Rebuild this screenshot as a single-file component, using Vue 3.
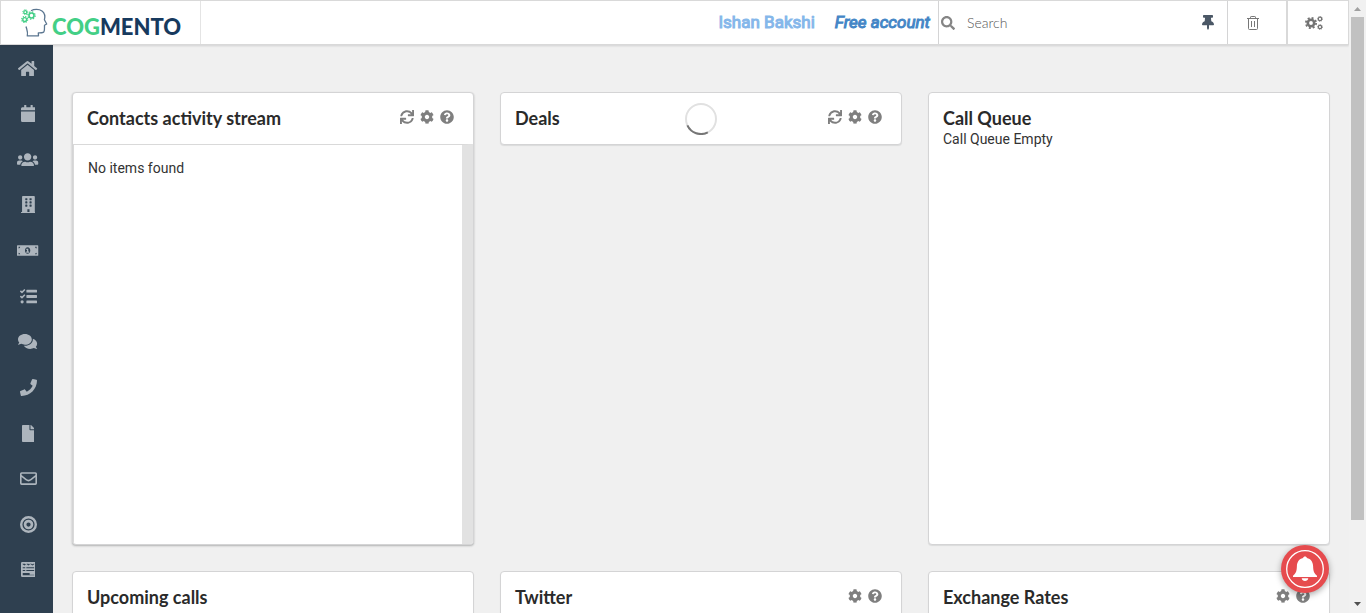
<script setup>
const icons = {
  home: {
    w: 576,
    d: 'M280.37 148.26L96 300.11V464a16 16 0 0 0 16 16l112.06-.29a16 16 0 0 0 15.92-16V368a16 16 0 0 1 16-16h64a16 16 0 0 1 16 16v95.64a16 16 0 0 0 16 16.05L464 480a16 16 0 0 0 16-16V300L295.67 148.26a12.19 12.19 0 0 0-15.3 0zM571.6 251.47L488 182.56V44.05a12 12 0 0 0-12-12h-56a12 12 0 0 0-12 12v72.61L318.47 43a48 48 0 0 0-61 0L4.34 251.47a12 12 0 0 0-1.6 16.9l25.5 31A12 12 0 0 0 45.15 301l235.22-193.74a12.19 12.19 0 0 1 15.3 0L530.9 301a12 12 0 0 0 16.9-1.6l25.5-31a12 12 0 0 0-1.7-16.93z',
  },
  calendar: {
    w: 448,
    d: 'M12 192h424c6.6 0 12 5.4 12 12v260c0 26.5-21.5 48-48 48H48c-26.5 0-48-21.5-48-48V204c0-6.6 5.4-12 12-12zm436-44v-36c0-26.5-21.5-48-48-48h-48V12c0-6.6-5.4-12-12-12h-40c-6.6 0-12 5.4-12 12v52H160V12c0-6.6-5.4-12-12-12h-40c-6.6 0-12 5.4-12 12v52H48C21.5 64 0 85.5 0 112v36c0 6.6 5.4 12 12 12h424c6.6 0 12-5.4 12-12z',
  },
  users: {
    w: 640,
    d: 'M96 256c35.3 0 64-28.7 64-64s-28.7-64-64-64-64 28.7-64 64 28.7 64 64 64zm448 0c35.3 0 64-28.7 64-64s-28.7-64-64-64-64 28.7-64 64 28.7 64 64 64zm32 32h-64c-17.6 0-33.5 7.1-45.1 18.6 40.3 22.1 68.9 62 75.1 109.4h66c17.7 0 32-14.3 32-32v-32c0-35.3-28.7-64-64-64zm-256 0c61.9 0 112-50.1 112-112S381.9 64 320 64 208 114.1 208 176s50.1 112 112 112zm76.8 32h-8.3c-20.8 10-43.9 16-68.5 16s-47.6-6-68.5-16h-8.3C179.6 320 128 371.600 128 432q0 16 16 16h352q16 0 16-16c0-60.400-51.600-112-115.200-112zm-223.700-13.400C161.500 295.100 145.600 288 128 288H64c-35.300 0-64 28.700-64 64v32c0 17.700 14.300 32 32 32h65.900c6.300-47.400 34.900-87.300 75.200-109.400z',
  },
  building: {
    w: 448,
    d: 'M12 480h20V24C32 11 43 0 56 0h336c13 0 24 11 24 24v456h20q12 0 12 12v20H0v-20q0-12 12-12zM128 76v40q0 12 12 12h40q12 0 12-12V76q0-12-12-12h-40q-12 0-12 12zM256 76v40q0 12 12 12h40q12 0 12-12V76q0-12-12-12h-40q-12 0-12 12zM128 172v40q0 12 12 12h40q12 0 12-12v-40q0-12-12-12h-40q-12 0-12 12zM256 172v40q0 12 12 12h40q12 0 12-12v-40q0-12-12-12h-40q-12 0-12 12zM128 268v40q0 12 12 12h40q12 0 12-12v-40q0-12-12-12h-40q-12 0-12 12zM256 268v40q0 12 12 12h40q12 0 12-12v-40q0-12-12-12h-40q-12 0-12 12zM192 396v84h64v-84z',
  },
  money: {
    w: 640,
    d: 'M20 96h600q20 0 20 20v280q0 20-20 20H20q-20 0-20-20V116q0-20 20-20zM48 144v48q48 0 48-48zM544 144q0 48 48 48v-48zM48 320v48h48q0-48-48-48zM592 320q-48 0-48 48h48zM320 160c-48 0-80 44-80 96s32 96 80 96 80-44 80-96-32-96-80-96zM280 200h60v88h24v32h-88v-32h26v-50h-22z',
  },
  tasks: {
    w: 512,
    d: 'M139.600 35.500a12 12 0 0 0-17 0L58.900 98.800l-22.700-22.100a12 12 0 0 0-17 0L3.500 92.400a12 12 0 0 0 0 17l47.600 47.400a12.800 12.800 0 0 0 17.600 0L156 69.500a12 12 0 0 0 0-17zM139.600 194.200a12 12 0 0 0-17 0L58.900 257.900l-22.700-22.500a12 12 0 0 0-17 0L3.500 251a12 12 0 0 0 0 17l47.600 47.500a12.800 12.800 0 0 0 17.600 0L156 228a12 12 0 0 0 0-17zM64 368a48 48 0 1 0 0 96a48 48 0 1 0 0-96zM208 54h288q16 0 16 16v52q0 16-16 16H208q-16 0-16-16V70q0-16 16-16zM208 214h288q16 0 16 16v52q0 16-16 16H208q-16 0-16-16v-52q0-16 16-16zM208 374h288q16 0 16 16v52q0 16-16 16H208q-16 0-16-16v-52q0-16 16-16z',
  },
  comments: {
    w: 576,
    d: 'M416 192c0-88.4-93.1-160-208-160S0 103.6 0 192c0 34.3 14.1 65.9 38 92-13.4 30.2-35.5 54.2-35.8 54.5-2.2 2.3-2.8 5.7-1.5 8.7S4.800 352 8 352c36.600 0 66.900-12.300 88.700-25 32.200 15.700 70.300 25 111.300 25 114.900 0 208-71.600 208-160zm122 220c23.900-26 38-57.700 38-92 0-66.900-53.500-124.200-129.300-148.100.9 6.600 1.300 13.300 1.300 20.100 0 105.900-107.700 192-240 192-10.800 0-21.300-.8-31.700-1.900C207.800 439.600 281.800 480 368 480c41 0 79.100-9.200 111.300-25 21.800 12.700 52.100 25 88.700 25 3.200 0 6.100-1.900 7.300-4.800 1.300-2.900.7-6.300-1.500-8.700-.3-.3-22.400-24.200-35.800-54.500z',
  },
  phone: {
    w: 512,
    d: 'M493.4 24.6l-104-24c-11.3-2.6-22.9 3.3-27.5 13.900l-48 112c-4.200 9.800-1.400 21.300 6.900 28l60.600 49.600c-36 76.700-98.900 140.500-177.200 177.200l-49.600-60.600c-6.800-8.300-18.200-11.100-28-6.900l-112 48C3.900 366.500-2 378.100.6 389.400l24 104C27.100 504.200 36.700 512 48 512c256.100 0 464-207.500 464-464 0-11.200-7.700-20.900-18.600-23.400z',
  },
  file: {
    w: 384,
    d: 'M224 136V0H24C10.700 0 0 10.700 0 24v464c0 13.300 10.700 24 24 24h336c13.300 0 24-10.700 24-24V160H248c-13.200 0-24-10.800-24-24zm160-14.100v6.100H256V0h6.100c6.400 0 12.500 2.500 17 7l97.900 98c4.500 4.500 7 10.600 7 16.900z',
  },
  mail: {
    w: 512,
    d: 'M48 64h416q48 0 48 48v288q0 48-48 48H48q-48 0-48-48V112q0-48 48-48zM56 112q-8 0-8 8v34l150 118q58 46 116 0l150-118v-34q0-8-8-8zM48 214v178q0 8 8 8h400q8 0 8-8V214L342 310q-86 66-172 0z',
  },
  target: {
    w: 512,
    d: 'M256 0a256 256 0 1 0 0 512a256 256 0 1 0 0-512zM256 72a184 184 0 1 1 0 368a184 184 0 1 1 0-368zM256 112a144 144 0 1 0 0 288a144 144 0 1 0 0-288zM256 192a64 64 0 1 1 0 128a64 64 0 1 1 0-128z',
  },
  form: {
    w: 448,
    d: 'M36 32h376q36 0 36 36v376q0 36-36 36H36q-36 0-36-36V68q0-36 36-36zM48 80v16l56 40 60-44 60 44 60-44 60 44 56-40V80h-24l-32 20-36-20h-40l-24 16-24-16h-40l-36 20-28-20zM52 190v28h76v-28zM160 190v28h236v-28zM52 274v28h76v-28zM160 274v28h236v-28zM52 358v72h344v-16H260v-56z',
  },
  refresh: {
    w: 512,
    d: 'M440.650 12.570l4 82.770A247.160 247.160 0 0 0 255.830 8C134.730 8 33.910 94.920 12.290 209.820A12 12 0 0 0 24.090 224h49.050a12 12 0 0 0 11.670-9.260 175.910 175.910 0 0 1 317-56.940l-101.460-4.860a12 12 0 0 0-12.570 12v47.410a12 12 0 0 0 12 12H500a12 12 0 0 0 12-12V12a12 12 0 0 0-12-12h-47.370a12 12 0 0 0-11.980 12.570zM255.830 432a175.610 175.610 0 0 1-146-77.800l101.800 4.870a12 12 0 0 0 12.570-12v-47.400a12 12 0 0 0-12-12H12a12 12 0 0 0-12 12V500a12 12 0 0 0 12 12h47.350a12 12 0 0 0 12-12.600l-4.150-82.570A247.170 247.170 0 0 0 255.830 504c121.110 0 221.930-86.920 243.550-201.820a12 12 0 0 0-11.800-14.180h-49.050a12 12 0 0 0-11.670 9.260A175.860 175.860 0 0 1 255.830 432z',
  },
  cog: {
    w: 512,
    d: 'M487.4 315.7l-42.6-24.6c4.3-23.2 4.3-47 0-70.2l42.6-24.6c4.9-2.8 7.1-8.6 5.5-14-11.1-35.6-30-67.8-54.7-94.6-3.8-4.1-10-5.1-14.8-2.3L380.8 110c-17.9-15.4-38.5-27.3-60.8-35.1V25.8c0-5.6-3.9-10.5-9.4-11.7-36.7-8.2-74.3-7.8-109.2 0-5.5 1.2-9.4 6.1-9.4 11.7V75c-22.2 7.9-42.8 19.8-60.8 35.1L88.7 85.5c-4.9-2.8-11-1.9-14.8 2.3-24.7 26.7-43.6 58.9-54.7 94.6-1.700 5.400.6 11.200 5.500 14L67.300 221c-4.300 23.200-4.300 47 0 70.200l-42.600 24.600c-4.900 2.800-7.100 8.600-5.500 14 11.100 35.600 30 67.800 54.700 94.600 3.800 4.100 10 5.100 14.800 2.300l42.600-24.600c17.900 15.400 38.500 27.300 60.800 35.100v49.200c0 5.600 3.900 10.500 9.400 11.700 36.700 8.200 74.300 7.800 109.200 0 5.500-1.200 9.400-6.100 9.400-11.700v-49.200c22.200-7.900 42.800-19.800 60.800-35.100l42.600 24.600c4.900 2.800 11 1.900 14.800-2.300 24.700-26.700 43.600-58.900 54.700-94.600 1.500-5.500-.7-11.300-5.600-14.100zM256 336c-44.100 0-80-35.900-80-80s35.900-80 80-80 80 35.900 80 80-35.900 80-80 80z',
  },
  help: {
    w: 512,
    d: 'M504 256c0 136.997-111.043 248-248 248S8 392.997 8 256C8 119.083 119.043 8 256 8s248 111.083 248 248zM262.655 90c-54.497 0-89.255 22.957-116.549 63.758-3.536 5.286-2.353 12.415 2.715 16.258l34.699 26.310c5.205 3.947 12.621 3.008 16.665-2.122 17.864-22.658 30.113-35.797 57.303-35.797 20.429 0 45.698 13.148 45.698 32.958 0 14.976-12.363 22.667-32.534 33.976C247.128 238.528 216 254.941 216 296v4c0 6.627 5.373 12 12 12h56c6.627 0 12-5.373 12-12v-1.333c0-28.462 83.186-29.647 83.186-106.667 0-58.002-60.165-102-116.531-102zM256 338c-25.365 0-46 20.635-46 46 0 25.364 20.635 46 46 46s46-20.636 46-46c0-25.365-20.635-46-46-46z',
  },
}

const nav = [
  ['home', 'Home'],
  ['calendar', 'Calendar'],
  ['users', 'Contacts'],
  ['building', 'Companies'],
  ['money', 'Deals'],
  ['tasks', 'Tasks'],
  ['comments', 'Cases'],
  ['phone', 'Calls'],
  ['file', 'Documents'],
  ['mail', 'Email'],
  ['target', 'Campaigns'],
  ['form', 'Forms'],
]

const cards = [
  { title: 'Contacts activity stream', actions: ['refresh', 'cog', 'help'], body: 'No items found', tall: true },
  { title: 'Deals', actions: ['refresh', 'cog', 'help'], loading: true },
  { title: 'Call Queue', actions: [], note: 'Call Queue Empty', tall: true },
  { title: 'Upcoming calls', actions: [], tall: true },
  { title: 'Twitter', actions: ['cog', 'help'], tall: true },
  { title: 'Exchange Rates', actions: ['cog', 'help'], tall: true },
]
</script>

<template>
  <div class="shell">
    <div class="app">
      <header class="topbar">
        <a class="logo" href="#" aria-label="Cogmento">
          <svg width="28" height="30" viewBox="0 0 28 30" fill="none">
            <path d="M10 2.800C13 1 18 .8 21 3c3 2.300 3.300 5.500 2.400 8.800L25.700 16l-2.200 1.200c-.1 3 .4 6.500-1.300 7.200-1.300.6-3 .5-4.900.5l.2 3H6.300c.9-4-.5-6.300-1.300-9.400" stroke="#5b7690" stroke-width="1.300" stroke-linejoin="round" />
            <g stroke="#43cf86">
              <circle cx="10.500" cy="7.500" r="2.500" stroke-width="1.600" />
              <circle cx="10.500" cy="7.500" r="3.700" stroke-width="1.200" stroke-dasharray="1.400 1.506" />
              <circle cx="3.700" cy="11.500" r="1.900" stroke-width="1.400" />
              <circle cx="3.700" cy="11.500" r="3" stroke-width="1.200" stroke-dasharray="1.300 1.060" />
              <circle cx="4.300" cy="4.200" r="1.500" stroke-width="1.300" />
              <circle cx="4.300" cy="4.200" r="2.500" stroke-width="1" stroke-dasharray="1 .963" />
            </g>
          </svg>
          <span class="wordmark"><span class="cog">COG</span>MENTO</span>
        </a>
        <div class="account">
          <span class="user">Ishan Bakshi</span>
          <a class="plan" href="#">Free account</a>
        </div>
        <label class="search">
          <svg width="14" height="14" viewBox="0 0 512 512" fill="#858585">
            <path d="M505 442.7L405.3 343c-4.500-4.500-10.600-7-17-7H372c27.600-35.300 44-79.700 44-128C416 93.100 322.900 0 208 0S0 93.100 0 208s93.100 208 208 208c48.300 0 92.700-16.400 128-44v16.300c0 6.400 2.500 12.500 7 17l99.700 99.700c9.400 9.400 24.600 9.400 33.900 0l28.300-28.300c9.400-9.400 9.400-24.600.1-34zM208 336c-70.700 0-128-57.200-128-128 0-70.700 57.200-128 128-128 70.700 0 128 57.200 128 128 0 70.700-57.200 128-128 128z" />
          </svg>
          <input type="text" placeholder="Search" aria-label="Search" />
        </label>
        <button class="tool pin" aria-label="Pin">
          <svg width="12" height="15" viewBox="0 0 384 512" preserveAspectRatio="none" fill="#4b5866">
            <path d="M298.028 214.267L285.793 96H328c13.255 0 24-10.745 24-24V24c0-13.255-10.745-24-24-24H56C42.745 0 32 10.745 32 24v48c0 13.255 10.745 24 24 24h42.207L85.972 214.267C37.465 236.820 0 277.261 0 328c0 13.255 10.745 24 24 24h136v104.007l24.845 51.578c2.941 5.882 11.364 5.893 14.311 0L224 456V352h136c13.255 0 24-10.745 24-24 0-51.183-37.983-91.420-85.972-113.733z" />
          </svg>
        </button>
        <button class="tool trash" aria-label="Trash">
          <svg width="12" height="14" viewBox="0 0 12 14" fill="none" stroke="#777" stroke-width="1">
            <path d="M0 2.500h12M3.500 2.500V1.200q0-.7.7-.7h3.600q.7 0 .7.7v1.300M1.500 2.500v10q0 1 1 1h7q1 0 1-1v-10M4.500 5v6M7.500 5v6" />
          </svg>
        </button>
        <button class="tool settings" aria-label="Settings">
          <svg width="18" height="14" viewBox="0 0 18 14" fill="none" stroke="#737373">
            <circle cx="6" cy="7" r="3.200" stroke-width="2.600" />
            <circle cx="6" cy="7" r="5.100" stroke-width="1.800" stroke-dasharray="2 2.005" />
            <circle cx="15" cy="2.900" r="1.700" stroke-width="1.200" />
            <circle cx="15" cy="2.900" r="2.500" stroke-width=".8" stroke-dasharray="1 .96" />
            <circle cx="15" cy="11" r="1.700" stroke-width="1.200" />
            <circle cx="15" cy="11" r="2.500" stroke-width=".8" stroke-dasharray="1 .96" />
          </svg>
        </button>
      </header>

      <div class="body">
        <nav class="sidebar">
          <a v-for="[icon, label] in nav" :key="icon" href="#" :aria-label="label">
            <svg height="17" :viewBox="`0 0 ${icons[icon].w} 512`" fill="currentColor">
              <path fill-rule="evenodd" :d="icons[icon].d" />
            </svg>
          </a>
        </nav>

        <main class="board">
          <section v-for="card in cards" :key="card.title" class="card" :class="{ tall: card.tall, feed: card.body }">
            <div class="head">
              <div class="heading">
                <h2>{{ card.title }}</h2>
                <p v-if="card.note">{{ card.note }}</p>
              </div>
              <div v-if="card.actions.length" class="actions">
                <button v-for="a in card.actions" :key="a" :aria-label="a">
                  <svg width="14" height="14" viewBox="0 0 512 512" fill="currentColor">
                    <path fill-rule="evenodd" :d="icons[a].d" />
                  </svg>
                </button>
              </div>
              <svg v-if="card.loading" class="loader" width="32" height="32" viewBox="0 0 32 32" fill="none" stroke-width="2">
                <circle cx="16" cy="16" r="15" stroke="#e1e1e1" />
                <path d="M22.800 29.400A15 15 0 0 1 2.400 22.300" stroke="#767676" />
              </svg>
            </div>
            <div v-if="card.body" class="content">{{ card.body }}</div>
          </section>
        </main>
      </div>

      <button class="bell" aria-label="Notifications">
        <svg width="48" height="48" viewBox="0 0 48 48">
          <circle cx="24" cy="24" r="18.300" fill="none" stroke="#fff" stroke-width="1.300" />
          <path fill="#fff" d="M24 11.500c1 0 1.700.6 1.900 1.400 4 .9 6 4 6.200 8 .2 5 .7 7 3.900 9.800V32H12v-1.300c3.200-2.800 3.700-4.800 3.900-9.800.2-4 2.200-7.100 6.200-8 .2-.8.900-1.400 1.900-1.400zM20.700 33.200h6.600c-.3 1.800-1.600 2.800-3.300 2.800s-3-1-3.300-2.800z" />
        </svg>
      </button>
    </div>

    <div class="scrollbar" aria-hidden="true">
      <svg width="17" height="17" viewBox="0 0 17 17"><path d="M5 11h7L8.500 7z" fill="#a0a0a0" /></svg>
      <div class="thumb"></div>
      <svg width="17" height="17" viewBox="0 0 17 17"><path d="M5 6h7l-3.500 4z" fill="#505050" /></svg>
    </div>
  </div>
</template>

<style>
body {
  margin: 0;
  overflow: hidden;
}
</style>

<style scoped>
.shell {
  display: flex;
  height: 100vh;
  background: #f0f0f0;
  color: #333;
  font: 14px/20px Roboto, "Liberation Sans", sans-serif;
}

.shell *,
.shell {
  box-sizing: border-box;
}

a {
  color: inherit;
  text-decoration: none;
}

button {
  padding: 0;
  border: 0;
  background: none;
  color: inherit;
}

svg {
  display: block;
}

.app {
  position: relative;
  flex: 1;
  min-width: 0;
  display: flex;
  flex-direction: column;
  overflow: hidden;
}

.topbar {
  position: relative;
  z-index: 1;
  flex: none;
  display: flex;
  height: 45px;
  border: 1px solid #d9d9d9;
  background: #fff;
  box-shadow: 0 1px 2px rgba(34, 36, 38, 0.15);
}

.logo {
  display: flex;
  align-items: center;
  gap: 3px;
  width: 200px;
  padding-left: 20px;
  border-right: 1px solid #e4e4e4;
}

.wordmark {
  padding-top: 8px;
  color: #173a5e;
  font: 900 22px/28px Lato, sans-serif;
}

.cog {
  color: #43cf86;
}

.account {
  flex: 1;
  display: flex;
  justify-content: flex-end;
  align-items: center;
  gap: 20px;
  padding: 0 8px 2px 0;
  font-size: 17px;
  -webkit-text-stroke: 1px currentColor;
}

.user {
  color: #85b7ea;
}

.plan {
  color: #4486c6;
  font-style: italic;
}

.search {
  display: flex;
  align-items: center;
  gap: 12px;
  width: 251px;
  padding-left: 2px;
  border-left: 1px solid #d4d4d5;
}

.search input {
  flex: 1;
  min-width: 0;
  padding: 0;
  border: 0;
  outline: 0;
  background: none;
  color: #555;
  font: 300 14px/20px Lato, sans-serif;
}

.search input::placeholder {
  color: #555;
}

.tool {
  display: flex;
  align-items: center;
  justify-content: center;
  height: 100%;
}

.pin {
  width: 38px;
}

.trash {
  width: 59px;
  padding-right: 8px;
  border-left: 1px solid #d4d4d5;
}

.settings {
  width: 62px;
  padding-right: 8px;
  border-left: 2px solid #d9d9d9;
}

.body {
  flex: 1;
  display: flex;
  min-height: 0;
}

.sidebar {
  flex: none;
  display: flex;
  flex-direction: column;
  justify-content: space-between;
  width: 53px;
  padding: 1px 0 21px 3px;
  background: #2f4050;
  color: #adb5bd;
}

.sidebar a {
  display: flex;
  align-items: center;
  justify-content: center;
  height: 44px;
}

.board {
  flex: 1;
  display: grid;
  grid-template-columns: repeat(3, 1fr);
  grid-auto-rows: 453px;
  align-items: start;
  gap: 26px;
  min-width: 0;
  padding: 47px 19px 26px;
}

.card {
  display: flex;
  flex-direction: column;
  border: 1px solid #d4d4d5;
  border-radius: 4px;
  background: #fff;
  box-shadow: 0 1px 1px rgba(34, 36, 38, 0.1);
  overflow: hidden;
}

.card.tall {
  height: 100%;
}

.head {
  position: relative;
  display: flex;
  justify-content: space-between;
  align-items: flex-start;
  min-height: 51px;
  padding: 14px 19px 0 14px;
}

h2 {
  margin: 0;
  color: #2a2a2a;
  font: 700 18px/22px Lato, sans-serif;
}

p {
  margin: 0;
}

.actions {
  display: flex;
  gap: 6px;
  padding-top: 3px;
  color: #7f7f7f;
}

.loader {
  position: absolute;
  top: 10px;
  left: calc(50% - 16px);
}

.feed {
  box-shadow: 0 1px 2px rgba(34, 36, 38, 0.3);
}

.content {
  flex: 1;
  padding: 13px 14px;
  border-top: 1px solid #d9d9d9;
  border-left: 1px solid #d9d9d9;
  border-right: 11px solid #e2e2e2;
}

.bell {
  position: absolute;
  right: 20px;
  bottom: 20px;
  z-index: 2;
  width: 48px;
  height: 48px;
  border-radius: 50%;
  background: #e64b4e;
  box-shadow: 0 2px 6px rgba(0, 0, 0, 0.35);
}

.scrollbar {
  flex: none;
  display: flex;
  flex-direction: column;
  width: 17px;
  background: #f1f1f1;
}

.thumb {
  height: 503px;
  margin: 0 2px auto;
  background: #c1c1c1;
}
</style>
